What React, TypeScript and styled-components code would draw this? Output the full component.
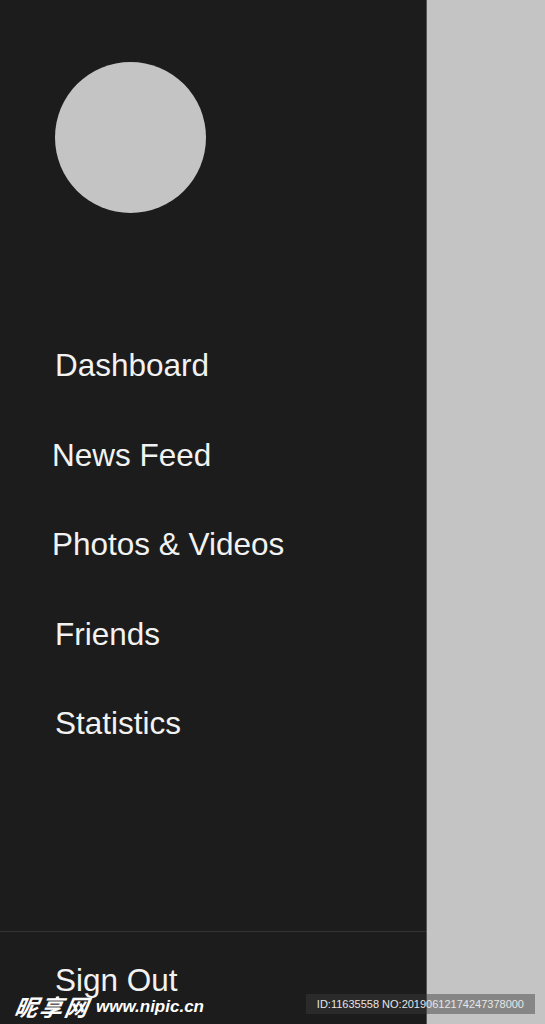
import styled, {createGlobalStyle} from "styled-components";
import React from "react";

const GlobalStyle = createGlobalStyle`
  html, body {
    margin: 0;
    padding: 0;
    background: #c4c4c4;
  }
  body {
    font-family: "Liberation Sans", Arial, sans-serif;
  }
`;

// small x nudges, the reference items are not perfectly aligned
const items: { label: string; shift: number }[] = [
    {label: "Dashboard", shift: 0},
    {label: "News Feed", shift: -3},
    {label: "Photos & Videos", shift: -3},
    {label: "Friends", shift: 0},
    {label: "Statistics", shift: 0},
];

function App() {
    return (
        <Screen>
            <GlobalStyle/>
            <Drawer>
                <Avatar/>
                <Nav>
                    {items.map(item =>
                        <NavItem key={item.label} $shift={item.shift}>
                            {item.label}
                        </NavItem>
                    )}
                </Nav>
                <Footer>
                    <NavItem $shift={0} $compact>Sign Out</NavItem>
                </Footer>
            </Drawer>
            <Content/>
            <Watermark>
                <Brand>
                    <BrandCn>昵享网</BrandCn>
                    <BrandUrl>www.nipic.cn</BrandUrl>
                </Brand>
                <StampId>ID:11635558 NO:20190612174247378000</StampId>
            </Watermark>
        </Screen>
    );
}

const Screen = styled.div`
  position: relative;
  display: flex;
  width: 545px;
  height: 1024px;
  overflow: hidden;
`;
const Drawer = styled.aside`
  display: flex;
  flex-direction: column;
  width: 426px;
  height: 100%;
  background: #1c1c1c;
  border-right: 1px solid #555;
  color: #f2f2f2;
`;
const Avatar = styled.div`
  width: 151px;
  height: 151px;
  margin: 62px 0 0 55px;
  border-radius: 50%;
  background: #c4c4c4;
`;
const Nav = styled.nav`
  display: flex;
  flex-direction: column;
  margin-top: 108px;
`;
const NavItem = styled.div<{ $shift: number; $compact?: boolean }>`
  padding-left: ${p => 55 + p.$shift}px;
  font-size: 31.5px;
  line-height: ${p => p.$compact ? 88 : 89.5}px;
`;
const Footer = styled.div`
  margin-top: auto;
  border-top: 1px solid #333;
  padding-top: 4px;
`;
const Content = styled.main`
  flex: 1;
  background: #c4c4c4;
`;
const Watermark = styled.div`
  position: absolute;
  left: 15px;
  right: 10px;
  bottom: 10px;
  height: 20px;
  display: flex;
  align-items: center;
  justify-content: space-between;
  pointer-events: none;
`;
const Brand = styled.div`
  display: flex;
  align-items: center;
  gap: 6px;
  margin-top: 4px;
  color: #fff;
  font-weight: bold;
  font-style: italic;
  line-height: 1;
`;
const BrandCn = styled.span`
  display: inline-block;
  font-family: "Noto Sans CJK SC", sans-serif;
  font-size: 23px;
  letter-spacing: 2px;
  transform: skewX(-10deg);
`;
const BrandUrl = styled.span`
  font-family: "Liberation Sans", Arial, sans-serif;
  font-size: 17px;
`;
const StampId = styled.div`
  background: rgba(60, 60, 60, 0.45);
  color: #e6e6e6;
  font-family: "Liberation Sans", Arial, sans-serif;
  font-size: 11px;
  line-height: 20px;
  padding: 0 11px;
`;

export default App;
